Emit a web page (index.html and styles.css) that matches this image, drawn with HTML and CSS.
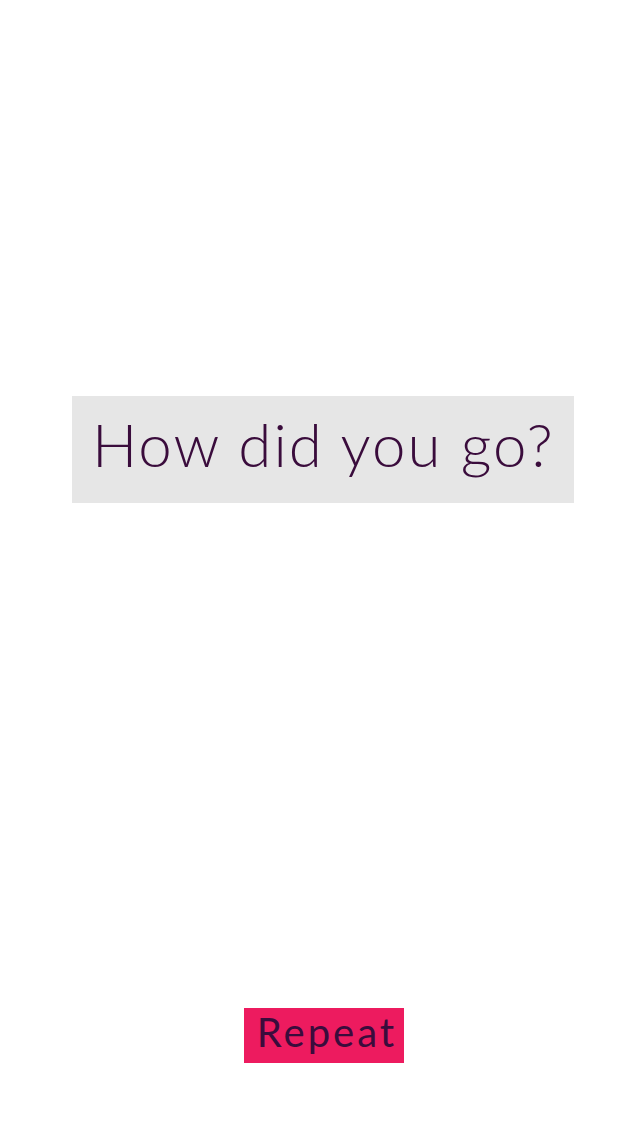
FILE: index.html
```html
<!DOCTYPE html>
<html>
<head>
<meta charset="utf-8">
<link rel="stylesheet" href="styles.css">
</head>
<body>
<main class="screen">
  <div class="question">
    <h1 class="question-text">How did you go?</h1>
  </div>
  <div class="spacer"></div>
  <button class="repeat">Repeat</button>
</main>
</body>
</html>
```
FILE: styles.css
```css
html, body {
  margin: 0;
  padding: 0;
  background: #ffffff;
}
.screen {
  width: 640px;
  height: 1136px;
  display: flex;
  flex-direction: column;
  align-items: flex-start;
  padding: 396px 0 73px 72px;
  box-sizing: border-box;
}
.question {
  width: 502px;
  height: 107px;
  background: #e6e6e6;
  display: flex;
  align-items: flex-start;
  box-sizing: border-box;
  padding: 18px 0 0 20px;
}
.question-text {
  margin: 0;
  font-family: "Lato", "Liberation Sans", sans-serif;
  font-weight: 300;
  font-size: 60px;
  letter-spacing: 2px;
  color: #3a0c3c;
  line-height: 1;
  white-space: nowrap;
}
.spacer {
  flex: 1;
}
.repeat {
  margin-left: 172px;
  width: 160px;
  height: 55px;
  border: none;
  border-radius: 0;
  background: #ed1b5f;
  color: #3a0c3c;
  font-family: "Lato", "Liberation Sans", sans-serif;
  font-weight: 400;
  font-size: 40px;
  letter-spacing: 3px;
  padding: 0 0 6px 6px;
  box-sizing: border-box;
  line-height: 49px;
}
```
